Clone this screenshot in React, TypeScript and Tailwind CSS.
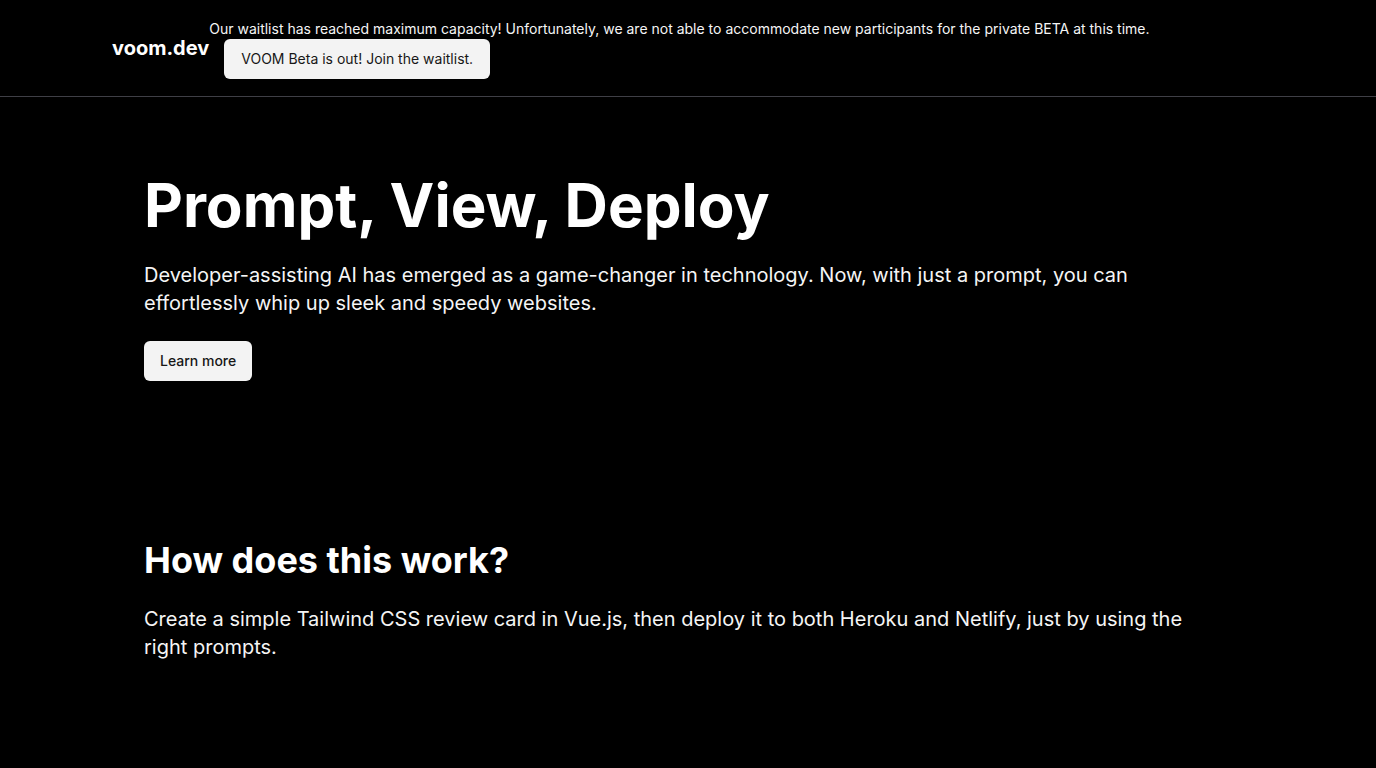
export default function App() {
  return (
    <div className="min-h-screen bg-black text-white font-['Inter',sans-serif]">
      <header className="h-[97px] border-b border-[#3f3f46]">
        <div className="flex h-full items-center px-28">
          <a href="#" className="text-xl font-bold leading-7">
            voom.dev
          </a>
          <div className="mt-[2px] flex flex-col items-start">
            <p className="text-sm leading-5 text-neutral-100">
              Our waitlist has reached maximum capacity! Unfortunately, we are not able to accommodate new
              participants for the private BETA at this time.
            </p>
            <button className="ml-[15px] h-10 rounded-md bg-[#f3f3f3] px-[17px] text-sm text-neutral-900">
              VOOM Beta is out! Join the waitlist.
            </button>
          </div>
        </div>
      </header>

      <main className="px-36">
        <div className="max-w-[1064px]">
          <section className="pt-[78px]">
            <h1 className="text-6xl font-bold">Prompt, View, Deploy</h1>
            <p className="mt-[26px] text-xl leading-7 text-neutral-100">
              Developer-assisting AI has emerged as a game-changer in technology. Now, with just a prompt, you can
              effortlessly whip up sleek and speedy websites.
            </p>
            <button className="mt-6 h-10 rounded-md bg-[#f3f3f3] px-4 text-sm font-medium text-neutral-900">
              Learn more
            </button>
          </section>

          <section className="pt-[159px] pb-24">
            <h2 className="text-4xl font-bold">How does this work?</h2>
            <p className="mt-[25px] text-xl leading-7 text-neutral-100">
              Create a simple Tailwind CSS review card in Vue.js, then deploy it to both Heroku and Netlify, just by
              using the right prompts.
            </p>
          </section>
        </div>
      </main>
    </div>
  );
}
